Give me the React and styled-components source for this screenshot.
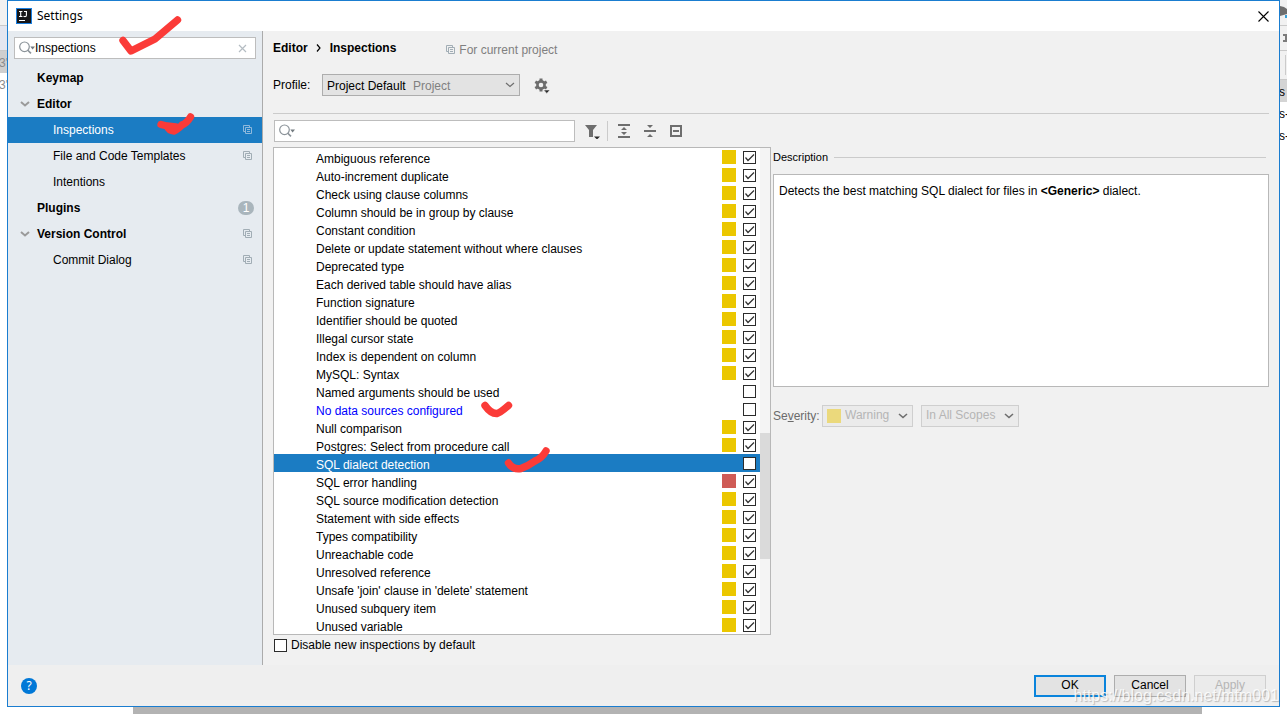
import React from 'react';
import styled, { createGlobalStyle, css } from 'styled-components';

const Global = createGlobalStyle`
  *, *::before, *::after { box-sizing: border-box; }
  html, body { margin: 0; }
  body {
    background: #fff;
    color: #000;
    font-family: "Liberation Sans", Arial, sans-serif;
    font-size: 12px;
    line-height: 18px;
  }
  button, input, select { font: inherit; color: inherit; margin: 0; }
  ul { list-style: none; margin: 0; padding: 0; }
`;

/* ---------- Desktop behind the dialog ---------- */
const Desktop = styled.div`
  display: grid;
  grid-template-columns: 7px minmax(0, 1fr) 7px;
  grid-template-rows: 1fr 7px;
  min-height: 100vh;
  overflow: hidden;
`;
const EdgeStrip = styled.div`
  overflow: hidden;
  white-space: nowrap;
  text-indent: -1px;
`;
const EdgeBand = styled.div`
  height: ${(p) => p.$h}px;
  background: ${(p) => p.$bg || '#fff'};
  border-bottom: ${(p) => (p.$line ? '1px solid #c9c9c9' : '0')};
  color: ${(p) => p.$color || '#000'};
  line-height: ${(p) => p.$h + 3}px;
  svg { display: block; }
`;
const Taskbar = styled.div`
  grid-column: 1 / -1;
  margin: 0 85px 0 133px;
  background: #b3b3b3;
`;

/* ---------- Dialog frame ---------- */
const Dialog = styled.main`
  display: flex;
  flex-direction: column;
  border: 1px solid #1a7dd0;
  background: #f1f1f1;
`;
const TitleBar = styled.header`
  display: flex;
  align-items: center;
  gap: 5px;
  height: 30px;
  padding: 0 10px 0 8px;
  background: #fff;
  font-family: "Noto Sans", "Open Sans", sans-serif;
`;
const TitleText = styled.h1`
  flex: 1;
  margin: 0;
  font-size: 12px;
  font-weight: 400;
`;
const IconButton = styled.button`
  display: flex;
  align-items: center;
  justify-content: center;
  padding: 0;
  border: 0;
  background: none;
  svg { display: block; }
`;
const Body = styled.div`
  flex: 1;
  display: flex;
`;

/* ---------- Sidebar ---------- */
const Sidebar = styled.nav`
  flex: 0 0 255px;
  padding-top: 6px;
  background: #e6ebf0;
  border-right: 1px solid #ababab;
`;
const SearchBox = styled.div`
  position: relative;
  display: flex;
  align-items: center;
  height: 22px;
  padding: 0 8px 0 4px;
  border: 1px solid #bdbdbd;
  background: #fff;
`;
const SidebarSearch = styled(SearchBox)`
  margin: 0 6px;
`;
const SearchInput = styled.input`
  flex: 1;
  min-width: 0;
  height: 18px;
  padding: 0;
  border: 0;
  outline: 0;
  background: none;
`;
const Tree = styled.ul`
  && { margin-top: 6px; }
`;
const TreeRow = styled.li`
  position: relative;
  display: flex;
  align-items: center;
  height: 26px;
  padding: 0 9px 0 ${(p) => (p.$child ? 45 : 12)}px;
  font-weight: ${(p) => (p.$child ? 400 : 700)};
  ${(p) => p.$selected && css`
    background: #1b7cc3;
    color: #fff;
  `}
`;
const Twisty = styled.span`
  flex: 0 0 17px;
  svg { display: block; }
`;
const TreeLink = styled.a`
  flex: 1;
  color: inherit;
  text-decoration: none;
`;
const Badge = styled.span`
  width: 16px;
  height: 14px;
  margin-right: -1px;
  border-radius: 7px;
  background: #a9b5bc;
  color: #fff;
  font-weight: 400;
  line-height: 14px;
  text-align: center;
`;

/* ---------- Main area ---------- */
const Content = styled.section`
  flex: 1;
  min-width: 0;
  padding: 6px 10px 10px;
`;
const Breadcrumb = styled.div`
  display: flex;
  align-items: center;
  height: 22px;
  font-weight: 700;
`;
const Crumb = styled.span`
  flex: none;
`;
const Arrow = styled.span`
  width: 22px;
  text-align: center;
  svg { display: inline-block; }
`;
const ProjectHint = styled.span`
  display: flex;
  align-items: center;
  gap: 3px;
  margin-left: 50px;
  padding-top: 3px;
  color: #808080;
  font-weight: 400;
`;
const ProfileRow = styled.div`
  display: flex;
  align-items: center;
  height: 22px;
  margin: 15px 0 17px;
`;
const ProfileLabel = styled.label`
  width: 49px;
`;
const Combo = styled.div`
  display: flex;
  align-items: center;
  width: ${(p) => p.$w}px;
  height: 22px;
  padding: 0 4px;
  border: 1px solid ${(p) => (p.$off ? '#cfcfcf' : '#adadad')};
  background: ${(p) => (p.$off ? '#ebebeb' : '#e3e3e3')};
  color: ${(p) => (p.$off ? '#b5b5b5' : '#000')};
`;
const ComboSelect = styled.select`
  appearance: none;
  flex: 1;
  min-width: 0;
  height: 20px;
  padding: 0 0 2px;
  border: 0;
  outline: 0;
  background: none;
  color: inherit;
  opacity: 1;
`;
const ProfileSelect = styled(ComboSelect)`
  flex: 0 0 86px;
  padding: 2px 0 0;
`;
const ComboHint = styled.span`
  flex: 1;
  padding-top: 2px;
  color: #808080;
`;
const Swatch = styled.span`
  flex: none;
  width: 14px;
  height: 14px;
  background: ${(p) => p.$c};
`;
const ComboSwatch = styled(Swatch)`
  margin: 0 4px 0 0;
`;
const GearButton = styled(IconButton)`
  margin-left: 14px;
`;
const Rule = styled.hr`
  height: 1px;
  margin: 0;
  border: 0;
  background: #cbcbcb;
`;
const Columns = styled.div`
  display: flex;
  gap: 2px;
  padding-top: 6px;
`;
const ListColumn = styled.div`
  flex: 0 0 498px;
`;
const Toolbar = styled.div`
  display: flex;
  align-items: center;
  height: 22px;
  margin: 0 0 5px 1px;
`;
const FilterBox = styled(SearchBox)`
  width: 301px;
  margin-right: 9px;
`;
const ToolDivider = styled.span`
  width: 1px;
  height: 20px;
  margin: 0 8px 0 7px;
  background: #cbcbcb;
`;
const ToolButton = styled(IconButton)`
  width: 16px;
  height: 16px;
  margin-right: 10px;
`;
const FilterButton = styled(ToolButton)`
  margin-right: 0;
`;
const ListFrame = styled.div`
  display: flex;
  border: 1px solid #b8b8b8;
  background: #fff;
`;
const InspectionList = styled.ul`
  flex: 1;
`;
const InspectionRow = styled.li`
  position: relative;
  display: flex;
  align-items: center;
  height: 18px;
  padding: 0 4px 0 42px;
  background: ${(p) => (p.$selected ? '#1b7cc3' : 'transparent')};
  color: ${(p) => (p.$selected ? '#fff' : p.$modified ? '#0000ff' : '#000')};
`;
const InspectionName = styled.label`
  flex: 1;
  padding-top: 3px;
`;
const Tick = styled.input`
  appearance: none;
  flex: none;
  display: block;
  width: 13px;
  height: 13px;
  border: 1px solid #2b2b2b;
  background: #fff;
  &:checked {
    background: #fff url("data:image/svg+xml,%3Csvg xmlns='http://www.w3.org/2000/svg' width='11' height='11'%3E%3Cpath d='M1.5 5.5L4 8.5L10 2.5' fill='none' stroke='%23303030' stroke-width='1.2'/%3E%3C/svg%3E") center no-repeat;
  }
`;
const RowTick = styled(Tick)`
  margin: 1px 0 0 7px;
`;
const Scrollbar = styled.div`
  display: flex;
  flex-direction: column;
  width: 10px;
  background: #f4f4f4;
`;
const Thumb = styled.div`
  height: 126px;
  margin-top: 285px;
  background: #dadada;
`;
const DisableRow = styled.label`
  display: flex;
  align-items: center;
  gap: 4px;
  height: 20px;
  padding-left: 1px;
`;

/* ---------- Description pane ---------- */
const DetailColumn = styled.div`
  flex: 1;
  min-width: 0;
  padding-top: 28px;
`;
const SectionTitle = styled.h2`
  display: flex;
  align-items: center;
  gap: 6px;
  margin: 0 3px 8px 0;
  font-size: 11px;
  font-weight: 400;
  &::after {
    content: "";
    flex: 1;
    height: 1px;
    background: #cbcbcb;
  }
`;
const DescriptionBox = styled.div`
  height: 213px;
  padding: 7px 5px;
  border: 1px solid #b8b8b8;
  background: #fff;
`;
const SeverityRow = styled.div`
  display: flex;
  align-items: center;
  gap: 8px;
  margin-top: 18px;
`;
const SeverityLabel = styled.label`
  width: 41px;
  color: #6b6b6b;
  white-space: nowrap;
`;

/* ---------- Footer ---------- */
const Footer = styled.footer`
  position: relative;
  display: flex;
  align-items: center;
  gap: 8px;
  height: 41px;
  padding: 1px 13px 0;
  background: #efefef;
`;
const HelpButton = styled.button`
  width: 16px;
  height: 16px;
  margin-right: auto;
  padding: 0;
  border: 0;
  border-radius: 8px;
  background: #0078d7;
  color: #fff;
  font-family: "Noto Sans", sans-serif;
  line-height: 16px;
`;
const DialogButton = styled.button`
  width: 72px;
  height: 22px;
  padding: 0;
  border: ${(p) => (p.$primary ? '2px solid #0a84dc' : '1px solid #adadad')};
  background: #e3e3e3;
  line-height: ${(p) => (p.$primary ? 16 : 18)}px;
  padding-bottom: 2px;
  &:disabled {
    border-color: #cfcfcf;
    background: #ebebeb;
    color: #b5b5b5;
  }
`;
const Watermark = styled.span`
  position: absolute;
  right: 0;
  bottom: 0;
  color: rgba(255, 255, 255, 0.85);
  font-size: 16px;
  line-height: 20px;
  text-shadow: 1px 1px 1px rgba(120, 120, 120, 0.45);
  pointer-events: none;
`;
const PenSvg = styled.svg`
  position: absolute;
  left: ${(p) => p.$x}px;
  top: ${(p) => p.$y}px;
  z-index: 2;
  overflow: visible;
  pointer-events: none;
`;

/* ---------- Drawings ---------- */
const Pen = ({ x, y, d }) => (
  <PenSvg $x={x} $y={y} width="70" height="45" aria-hidden="true">
    <path d={d} fill="none" stroke="#fb3b38" strokeWidth="7.4" strokeLinecap="round" strokeLinejoin="round" />
  </PenSvg>
);
const AppLogo = () => (
  <svg width="16" height="16" viewBox="0 0 16 16" aria-hidden="true">
    <rect width="16" height="16" fill="#1b7fe0" />
    <rect x="1" y="1" width="14" height="14" fill="#161618" />
    <path d="M3 3.5H6.4M4.7 3.5V8.3M3 8.5H6.4M8 3.5H11M10.4 3.5V7.2Q10.4 8.6 8.9 8.6Q8 8.6 7.5 8M3 12.5H9" fill="none" stroke="#fff" strokeWidth="1.1" />
  </svg>
);
const CloseIcon = () => (
  <svg width="11" height="11" aria-hidden="true">
    <path d="M.5 .5L10.5 10.5M10.5 .5L.5 10.5" stroke="#000" strokeWidth="1.1" />
  </svg>
);
const ClearIcon = () => (
  <svg width="9" height="9" aria-hidden="true">
    <path d="M1 1L8 8M8 1L1 8" stroke="#b4bcc2" strokeWidth="1.2" />
  </svg>
);
const SearchIcon = () => (
  <svg width="16" height="14" viewBox="0 0 16 14" aria-hidden="true">
    <circle cx="5.5" cy="5.8" r="4.8" fill="none" stroke="#8b9399" strokeWidth="1.2" />
    <path d="M8.8 9.2L12 12.4" stroke="#8b9399" strokeWidth="1.6" />
    <path d="M11.3 5.5H16L13.6 8.5Z" fill="#737b80" />
  </svg>
);
const CopyIcon = ({ color = '#a1adb5' }) => (
  <svg width="10" height="10" viewBox="0 0 10 10" aria-hidden="true">
    <path d="M2 6.5H.5V.5H6.5V2M2.5 2.5H8.5V8.5H2.5ZM4 4.5H7M4 6.5H7" fill="none" stroke={color} />
  </svg>
);
const Chevron = ({ color = '#6e6e6e', w = 1.2 }) => (
  <svg width="10" height="8" viewBox="0 0 10 8" aria-hidden="true">
    <path d="M1 2L5 5.5L9 2" fill="none" stroke={color} strokeWidth={w} />
  </svg>
);
const GearIcon = () => (
  <svg width="17" height="17" viewBox="0 0 17 17" aria-hidden="true">
    <circle cx="7" cy="8" r="3.6" fill="none" stroke="#6e6e6e" strokeWidth="2.6" />
    <path d="M7 1.4V4M7 12V14.6M1.3 4.7L3.6 6M10.4 10L12.7 11.3M1.3 11.3L3.6 10M10.4 6L12.7 4.7" stroke="#6e6e6e" strokeWidth="3" />
    <path d="M9.6 13H16L12.8 16.4Z" fill="#2b2b2b" stroke="#f1f1f1" strokeWidth=".6" />
  </svg>
);
const FunnelIcon = () => (
  <svg width="16" height="16" viewBox="0 0 16 16" aria-hidden="true">
    <path d="M1 2H13L9 7V14H5V7Z" fill="#6e6e6e" />
    <path d="M10 13.5H16L13 16.5Z" fill="#2b2b2b" />
  </svg>
);
const ExpandIcon = () => (
  <svg width="16" height="16" viewBox="0 0 16 16" aria-hidden="true">
    <path d="M2 1H14V3H2ZM2 13H14V15H2ZM8 4L11 7H5ZM8 12L5 9H11Z" fill="#6e6e6e" />
  </svg>
);
const CollapseIcon = () => (
  <svg width="16" height="16" viewBox="0 0 16 16" aria-hidden="true">
    <path d="M2 7H14V9H2ZM5 2H11L8 5ZM5 14H11L8 11Z" fill="#6e6e6e" />
  </svg>
);
const ResetIcon = () => (
  <svg width="16" height="16" viewBox="0 0 16 16" aria-hidden="true">
    <path d="M3 3H13V13H3Z" fill="none" stroke="#6e6e6e" strokeWidth="2" />
    <path d="M5 7H11V9H5Z" fill="#6e6e6e" />
  </svg>
);

const TREE = [
  { name: 'Keymap' },
  { name: 'Editor', open: true },
  { name: 'Inspections', child: true, copy: true, selected: true, pen: { x: 148, y: -3, d: 'M5 10.5L11 12Q13 17 18 17Q21 16 26 11Q31 9 34.5 3M11 12L20 13' } },
  { name: 'File and Code Templates', child: true, copy: true },
  { name: 'Intentions', child: true },
  { name: 'Plugins', badge: 1 },
  { name: 'Version Control', open: true, copy: true },
  { name: 'Commit Dialog', child: true, copy: true },
];

const Y = '#ebc700';
const R = '#cf5b56';
const ROWS = [
  ['Ambiguous reference', Y],
  ['Auto-increment duplicate', Y],
  ['Check using clause columns', Y],
  ['Column should be in group by clause', Y],
  ['Constant condition', Y],
  ['Delete or update statement without where clauses', Y],
  ['Deprecated type', Y],
  ['Each derived table should have alias', Y],
  ['Function signature', Y],
  ['Identifier should be quoted', Y],
  ['Illegal cursor state', Y],
  ['Index is dependent on column', Y],
  ['MySQL: Syntax', Y],
  ['Named arguments should be used', null],
  ['No data sources configured', null, { modified: true, pen: { x: 207, y: 0, d: 'M4 5.5Q10 14 16 13.5Q19 13 27.5 5.5' } }],
  ['Null comparison', Y],
  ['Postgres: Select from procedure call', Y],
  ['SQL dialect detection', null, { selected: true, pen: { x: 230, y: -6, d: 'M4.5 15Q9 22 17 20.5Q24 18 31 13Q38 10 42 3' } }],
  ['SQL error handling', R],
  ['SQL source modification detection', Y],
  ['Statement with side effects', Y],
  ['Types compatibility', Y],
  ['Unreachable code', Y],
  ['Unresolved reference', Y],
  ["Unsafe 'join' clause in 'delete' statement", Y],
  ['Unused subquery item', Y],
  ['Unused variable', Y],
];

export default function App() {
  return (
    <>
      <Global />
      <Desktop>
        <EdgeStrip>
          <EdgeBand $h={26} $bg="#f1f1f1" $line />
          <EdgeBand $h={25} $bg="#e3e6f0" $line />
          <EdgeBand $h={22} $bg="#cfcfcf" $color="#8c8c8c">3'</EdgeBand>
          <EdgeBand $h={22} $color="#8c8c8c">3'</EdgeBand>
        </EdgeStrip>

        <Dialog>
          <TitleBar>
            <AppLogo />
            <TitleText>Settings</TitleText>
            <IconButton aria-label="Close"><CloseIcon /></IconButton>
          </TitleBar>

          <Body>
            <Sidebar aria-label="Settings sections">
              <SidebarSearch>
                <SearchIcon />
                <SearchInput aria-label="Search settings" defaultValue="Inspections" />
                <IconButton aria-label="Clear search"><ClearIcon /></IconButton>
                <Pen x={102} y={-23} d="M6 25.5L14 36L38 24L60.5 5" />
              </SidebarSearch>
              <Tree>
                {TREE.map((t) => (
                  <TreeRow key={t.name} $child={t.child} $selected={t.selected}>
                    {!t.child && <Twisty>{t.open && <Chevron color="#9a9a9a" w={2} />}</Twisty>}
                    <TreeLink href="#">{t.name}</TreeLink>
                    {t.copy && <CopyIcon color={t.selected ? '#8fb9dc' : undefined} />}
                    {t.badge && <Badge>{t.badge}</Badge>}
                    {t.pen && <Pen {...t.pen} />}
                  </TreeRow>
                ))}
              </Tree>
            </Sidebar>

            <Content>
              <Breadcrumb>
                <Crumb>Editor</Crumb>
                <Arrow>
                  <svg width="5" height="8" aria-hidden="true"><path d="M1 .5L4 4L1 7.5" fill="none" stroke="#000" strokeWidth="1.2" /></svg>
                </Arrow>
                <Crumb>Inspections</Crumb>
                <ProjectHint><CopyIcon />For current project</ProjectHint>
              </Breadcrumb>
              <ProfileRow>
                <ProfileLabel htmlFor="profile">Profile:</ProfileLabel>
                <Combo $w={198}>
                  <ProfileSelect id="profile"><option>Project Default</option></ProfileSelect>
                  <ComboHint>Project</ComboHint>
                  <Chevron />
                </Combo>
                <GearButton aria-label="Profile actions"><GearIcon /></GearButton>
              </ProfileRow>
              <Rule />
              <Columns>
                <ListColumn>
                  <Toolbar>
                    <FilterBox>
                      <SearchIcon />
                      <SearchInput aria-label="Search inspections" />
                    </FilterBox>
                    <FilterButton aria-label="Filter"><FunnelIcon /></FilterButton>
                    <ToolDivider />
                    <ToolButton aria-label="Expand all"><ExpandIcon /></ToolButton>
                    <ToolButton aria-label="Collapse all"><CollapseIcon /></ToolButton>
                    <ToolButton aria-label="Reset to empty"><ResetIcon /></ToolButton>
                  </Toolbar>
                  <ListFrame>
                    <InspectionList>
                      {ROWS.map(([name, color, extra = {}], i) => (
                        <InspectionRow key={name} $selected={extra.selected} $modified={extra.modified}>
                          <InspectionName htmlFor={`row-${i}`}>{name}</InspectionName>
                          {color && <Swatch $c={color} />}
                          <RowTick id={`row-${i}`} type="checkbox" defaultChecked={Boolean(color)} />
                          {extra.pen && <Pen {...extra.pen} />}
                        </InspectionRow>
                      ))}
                    </InspectionList>
                    <Scrollbar><Thumb /></Scrollbar>
                  </ListFrame>
                  <DisableRow>
                    <Tick type="checkbox" />
                    Disable new inspections by default
                  </DisableRow>
                </ListColumn>

                <DetailColumn>
                  <SectionTitle>Description</SectionTitle>
                  <DescriptionBox>
                    Detects the best matching SQL dialect for files in <b>&lt;Generic&gt;</b> dialect.
                  </DescriptionBox>
                  <SeverityRow>
                    <SeverityLabel htmlFor="severity">Se<u>v</u>erity:</SeverityLabel>
                    <Combo $w={91} $off>
                      <ComboSwatch $c="#ebd97c" />
                      <ComboSelect id="severity" disabled><option>Warning</option></ComboSelect>
                      <Chevron w={1.6} />
                    </Combo>
                    <Combo $w={98} $off>
                      <ComboSelect aria-label="Scope" disabled><option>In All Scopes</option></ComboSelect>
                      <Chevron w={1.6} />
                    </Combo>
                  </SeverityRow>
                </DetailColumn>
              </Columns>
            </Content>
          </Body>

          <Footer>
            <HelpButton aria-label="Help">?</HelpButton>
            <DialogButton $primary>OK</DialogButton>
            <DialogButton>Cancel</DialogButton>
            <DialogButton disabled>Apply</DialogButton>
            <Watermark>https://blog.csdn.net/mtm001</Watermark>
          </Footer>
        </Dialog>

        <EdgeStrip>
          <EdgeBand $h={26} $bg="#f1f1f1" $line>
            <svg width="7" height="20" aria-hidden="true">
              <path d="M0 6L4 7L7 9V14L0 16Z" fill="#6e6e6e" />
              <path d="M5 15H7V18H5Z" fill="#389fd6" />
            </svg>
          </EdgeBand>
          <EdgeBand $h={25} $bg="#f1f1f1" $line>
            <svg width="7" height="20" aria-hidden="true"><path d="M3 8H7V16H3V14H5V10H3Z" fill="#7c7c7c" /></svg>
          </EdgeBand>
          <EdgeBand $h={29} $bg="#f1f1f1" $line>
            <svg width="7" height="25" aria-hidden="true"><path d="M5.5 4V24" stroke="#cbcbcb" /></svg>
          </EdgeBand>
          <EdgeBand $h={22} $bg="#d4d4d4">s</EdgeBand>
          <EdgeBand $h={22}>s-</EdgeBand>
          <EdgeBand $h={22}>s-</EdgeBand>
        </EdgeStrip>
        <Taskbar />
      </Desktop>
    </>
  );
}
